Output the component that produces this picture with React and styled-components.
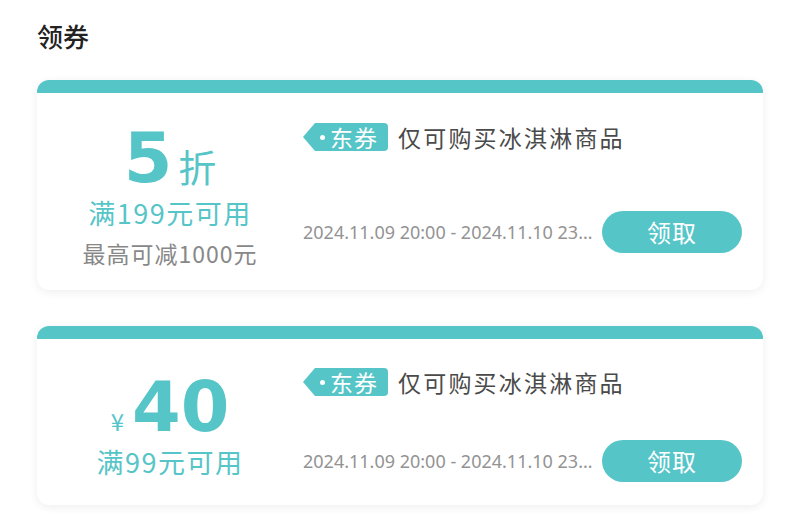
import React from "react";
import styled, { createGlobalStyle } from "styled-components";

const teal = "#56c5c8";
const cjk = `"Noto Sans CJK SC", "Noto Sans", sans-serif`;

const GlobalStyle = createGlobalStyle`
  html, body {
    margin: 0;
    padding: 0;
    background: #ffffff;
  }
  body {
    font-family: ${cjk};
    -webkit-font-smoothing: antialiased;
  }
`;

const Page = styled.div`
  padding: 23px 37px 24px 37px;
  display: flex;
  flex-direction: column;
`;

const Title = styled.h2`
  margin: 0 0 31px 0;
  font-size: 26px;
  line-height: 26px;
  font-weight: 500;
  color: #222;
`;

const List = styled.div`
  display: flex;
  flex-direction: column;
  gap: 36px;
`;

const Card = styled.div`
  background: #fff;
  border-radius: 12px;
  overflow: hidden;
  box-shadow: 0 2px 10px rgba(0, 0, 0, 0.07);
  display: flex;
  flex-direction: column;
`;

const TopBar = styled.div`
  height: 13px;
  background: ${teal};
`;

const Body = styled.div`
  display: grid;
  grid-template-columns: 266px 1fr;
  height: ${(p) => p.$height}px;
`;

const Value = styled.div`
  display: flex;
  flex-direction: column;
  align-items: center;
  justify-content: center;
  padding-top: 12px;
`;

const Amount = styled.div`
  display: flex;
  align-items: baseline;
  color: ${teal};
  height: 60px;
`;

const Big = styled.span`
  font-family: "DejaVu Sans", "Liberation Sans", sans-serif;
  font-weight: 700;
  font-size: 70px;
  line-height: 60px;
`;

const Unit = styled.span`
  font-size: 38px;
  line-height: 60px;
  margin-left: 6px;
`;

const Currency = styled.span`
  font-size: 24px;
  line-height: 40px;
  margin-right: 8px;
`;

const Threshold = styled.div`
  margin-top: 8px;
  font-size: 27px;
  line-height: 34px;
  letter-spacing: 1.5px;
  color: ${teal};
`;

const Cap = styled.div`
  margin-top: 8px;
  font-size: 23px;
  line-height: 30px;
  letter-spacing: 1px;
  color: #888;
`;

const Detail = styled.div`
  display: flex;
  flex-direction: column;
  justify-content: space-between;
  padding: ${(p) => p.$top}px 21px ${(p) => p.$bottom}px 0;
  min-width: 0;
`;

const Heading = styled.div`
  display: flex;
  align-items: center;
`;

const Tag = styled.span`
  position: relative;
  display: inline-flex;
  align-items: center;
  height: 28px;
  margin-left: 12px;
  padding: 0 10px 0 5px;
  background: ${teal};
  border-radius: 0 4px 4px 0;
  color: #fff;
  font-size: 23px;
  line-height: 28px;
  letter-spacing: 1px;

  &::before {
    content: "";
    position: absolute;
    left: -12px;
    top: 0;
    border-top: 14px solid transparent;
    border-bottom: 14px solid transparent;
    border-right: 12px solid ${teal};
  }
`;

const Dot = styled.span`
  width: 5px;
  height: 5px;
  border-radius: 50%;
  background: #fff;
  margin-right: 5px;
`;

const Scope = styled.span`
  margin-left: 10px;
  font-size: 23px;
  line-height: 28px;
  letter-spacing: 2.2px;
  color: #4a4a4a;
`;

const Footer = styled.div`
  display: flex;
  align-items: center;
  gap: 5px;
`;

const Period = styled.span`
  flex: 1;
  min-width: 0;
  white-space: nowrap;
  overflow: hidden;
  text-overflow: ellipsis;
  font-family: "Noto Sans", sans-serif;
  font-weight: 400;
  font-size: 18px;
  color: #939393;
`;

const Claim = styled.button`
  flex: none;
  width: 140px;
  height: 42px;
  border: none;
  border-radius: 21px;
  background: ${teal};
  color: #fff;
  font-family: ${cjk};
  font-size: 24px;
  line-height: 42px;
  letter-spacing: 1px;
  padding: 0;
  cursor: pointer;
`;

const coupons = [
  {
    id: 1,
    kind: "discount",
    value: "5",
    threshold: "满199元可用",
    cap: "最高可减1000元",
    height: 197,
    top: 30,
    bottom: 37,
  },
  {
    id: 2,
    kind: "cash",
    value: "40",
    threshold: "满99元可用",
    height: 166,
    top: 29,
    bottom: 23,
  },
];

function Coupon({ c }) {
  return (
    <Card>
      <TopBar />
      <Body $height={c.height}>
        <Value>
          <Amount>
            {c.kind === "cash" && <Currency>¥</Currency>}
            <Big>{c.value}</Big>
            {c.kind === "discount" && <Unit>折</Unit>}
          </Amount>
          <Threshold>{c.threshold}</Threshold>
          {c.cap && <Cap>{c.cap}</Cap>}
        </Value>
        <Detail $top={c.top} $bottom={c.bottom}>
          <Heading>
            <Tag>
              <Dot />
              东券
            </Tag>
            <Scope>仅可购买冰淇淋商品</Scope>
          </Heading>
          <Footer>
            <Period>2024.11.09 20:00 - 2024.11.10 23:59:59</Period>
            <Claim>领取</Claim>
          </Footer>
        </Detail>
      </Body>
    </Card>
  );
}

export default function App() {
  return (
    <>
      <GlobalStyle />
      <Page>
        <Title>领券</Title>
        <List>
          {coupons.map((c) => (
            <Coupon key={c.id} c={c} />
          ))}
        </List>
      </Page>
    </>
  );
}
